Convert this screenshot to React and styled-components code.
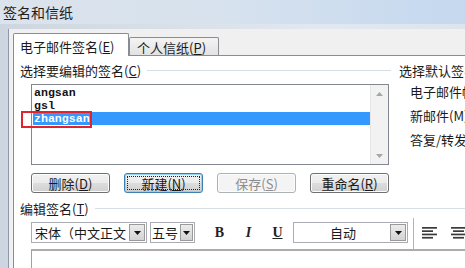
import styled, { createGlobalStyle } from "styled-components";

const GlobalStyle = createGlobalStyle`
  html, body {
    margin: 0;
    padding: 0;
    overflow: hidden;
    background: #f0f0f0;
  }
  body {
    font-family: "Noto Sans CJK SC", "Noto Sans", sans-serif;
  }
`;

const Window = styled.div`
  width: 640px;
  height: 268px;
  display: flex;
  flex-direction: column;
  font-family: "Noto Sans CJK SC", "Noto Sans", sans-serif;
  font-size: 13px;
  color: #1a1a1a;
`;

const TitleBar = styled.div`
  height: 24px;
  flex-shrink: 0;
  display: flex;
  align-items: center;
  padding-left: 3px;
  font-size: 14px;
  color: #1e1e1e;
  background: linear-gradient(to right, #dbe3ec 0%, #d7e2ee 35%, #c8daef 65%, #bcd3ed 100%);
`;

const Frame = styled.div`
  flex: 1;
  min-height: 0;
  display: flex;
  padding: 5px 0 0 8px;
  background: linear-gradient(to right, #cdd6e0, #e2e8ef 50%, #d7dfe8);
`;

const Body = styled.div`
  flex: 1;
  display: flex;
  flex-direction: column;
  border-left: 1px solid #8d99a6;
  background: #f0f0f0;
  padding: 4px 0 0 4px;
`;

const TabRow = styled.div`
  display: flex;
  align-items: flex-end;
  margin-bottom: -1px;
  position: relative;
  z-index: 1;
`;

const Tab = styled.div`
  box-sizing: border-box;
  width: ${(p) => p.$w}px;
  height: ${(p) => (p.$active ? 23 : 18)}px;
  margin-bottom: ${(p) => (p.$active ? 0 : 1)}px;
  border: 1px solid #898c95;
  border-bottom: none;
  border-radius: 2px 2px 0 0;
  padding: ${(p) => (p.$active ? "5px 0 0 6px" : "2px 0 0 7px")};
  background: ${(p) => (p.$active ? "#ffffff" : "linear-gradient(#f4f4f4, #e2e2e2)")};
  line-height: 15px;
  white-space: nowrap;
`;

const Key = styled.span`
  text-decoration: underline;
`;

const Panel = styled.div`
  flex: 1;
  display: flex;
  flex-direction: column;
  border-top: 1px solid #898c95;
  border-left: 1px solid #898c95;
  background: #ffffff;
  padding: 7px 0 0 6px;
`;

const TopSection = styled.div`
  display: flex;
  gap: 8px;
`;

const LeftCol = styled.div`
  width: 371px;
  flex-shrink: 0;
  display: flex;
  flex-direction: column;
`;

const RightCol = styled.div`
  flex: 1;
  display: flex;
  flex-direction: column;
  white-space: nowrap;
`;

const GroupHeader = styled.div`
  display: flex;
  align-items: center;
  height: 15px;
  line-height: 15px;
  white-space: nowrap;
  margin-top: ${(p) => p.$mt || 0}px;
`;

const GroupLine = styled.div`
  flex: 1;
  height: 1px;
  margin-left: 6px;
  background: #d5dfe5;
  box-shadow: 0 1px 0 #ffffff;
`;

const RightItem = styled.div`
  margin: ${(p) => (p.$first ? 6 : 9)}px 0 0 11px;
  line-height: 15px;
`;

const ListBox = styled.div`
  position: relative;
  box-sizing: border-box;
  width: 358px;
  height: 81px;
  margin: 6px 0 0 11px;
  border: 1px solid #828790;
  background: #ffffff;
  display: flex;
`;

const Items = styled.div`
  flex: 1;
  padding-top: 1px;
`;

const Item = styled.div`
  height: 13px;
  line-height: 13px;
  margin-left: 1px;
  padding-left: 1px;
  font-family: "Liberation Mono", monospace;
  font-weight: bold;
  font-size: 11.6px;
  color: ${(p) => (p.$selected ? "#ffffff" : "#111111")};
  background: ${(p) => (p.$selected ? "#3399ff" : "transparent")};
`;

const Scrollbar = styled.div`
  width: 17px;
  display: flex;
  flex-direction: column;
  justify-content: space-between;
  background: #f2f2f2;
  border-left: 1px solid #e6e6e6;
`;

const ScrollBtn = styled.div`
  height: 17px;
  display: flex;
  align-items: center;
  justify-content: center;
`;

const Highlight = styled.div`
  position: absolute;
  left: -11px;
  top: 26px;
  width: 71px;
  height: 17px;
  box-sizing: border-box;
  border: 2px solid #e3222b;
`;

const ButtonRow = styled.div`
  width: 358px;
  margin: 8px 0 0 11px;
  display: flex;
  justify-content: space-between;
`;

const Button = styled.div`
  box-sizing: border-box;
  width: 79px;
  height: 20px;
  display: flex;
  align-items: center;
  justify-content: center;
  border-radius: 3px;
  border: 1px solid ${(p) => (p.$focused ? "#3c7fb1" : p.$disabled ? "#adb2b5" : "#707070")};
  background: ${(p) =>
    p.$disabled
      ? "#f4f4f4"
      : "linear-gradient(#f2f2f2 0%, #ebebeb 50%, #dddddd 51%, #d0d0d0 100%)"};
  box-shadow: ${(p) => (p.$focused ? "inset 0 0 0 1px #98d1ef" : "inset 0 0 0 1px #fcfcfc")};
  outline: ${(p) => (p.$focused ? "1px dotted #222" : "none")};
  outline-offset: -4px;
  color: ${(p) => (p.$disabled ? "#8d8d8d" : "#1a1a1a")};
  line-height: 15px;
`;

const Toolbar = styled.div`
  height: 23px;
  margin: 5px 0 0 11px;
  display: flex;
  align-items: center;
`;

const Combo = styled.div`
  box-sizing: border-box;
  width: ${(p) => p.$w}px;
  height: 21px;
  margin-left: ${(p) => p.$ml || 0}px;
  flex-shrink: 0;
  display: flex;
  border: 1px solid #a9acb2;
  background: #ffffff;
`;

const ComboText = styled.div`
  flex: 1;
  overflow: hidden;
  white-space: nowrap;
  line-height: 19px;
  padding-left: ${(p) => (p.$tight ? 1 : 3)}px;
  text-align: ${(p) => (p.$center ? "center" : "left")};
`;

const DropBtn = styled.div`
  width: ${(p) => (p.$narrow ? 11 : 14)}px;
  margin: 1px;
  display: flex;
  align-items: center;
  justify-content: center;
  border: 1px solid #9a9a9a;
  background: linear-gradient(#ececec, #d2d2d2);
`;

const ToolBtn = styled.div`
  width: 29px;
  height: 21px;
  margin-left: ${(p) => p.$ml || 0}px;
  flex-shrink: 0;
  display: flex;
  align-items: center;
  justify-content: center;
  font-family: "Liberation Serif", serif;
  font-weight: bold;
  font-size: 14px;
  color: #222222;
`;

const Separator = styled.div`
  width: 1px;
  height: 31px;
  margin: -3px 0 0 5px;
  align-self: flex-start;
  background: #b4b4b4;
  border-right: 1px solid #ffffff;
  flex-shrink: 0;
`;

const Editor = styled.div`
  flex: 1;
  margin: 5px 0 0 11px;
  border-top: 2px solid #acacac;
  border-left: 1px solid #a0a0a0;
  background: #ffffff;
`;

function Arrow({ up, color = "#111" }) {
  return (
    <svg width="7" height="4" viewBox="0 0 7 4">
      <polygon points={up ? "0,4 7,4 3.5,0" : "0,0 7,0 3.5,4"} fill={color} />
    </svg>
  );
}

function AlignIcon({ center }) {
  const lines = [15, 11, 15, 11];
  return (
    <svg width="15" height="12" viewBox="0 0 15 12">
      {lines.map((w, i) => (
        <rect
          key={i}
          x={center ? (15 - w) / 2 : 0}
          y={i * 3.3}
          width={w}
          height="1.7"
          fill="#3a3a3a"
        />
      ))}
    </svg>
  );
}

export default function App() {
  return (
    <Window>
      <GlobalStyle />
      <TitleBar>签名和信纸</TitleBar>
      <Frame>
        <Body>
          <TabRow>
            <Tab $active $w={116}>
              电子邮件签名(<Key>E</Key>)
            </Tab>
            <Tab $w={90}>
              个人信纸(<Key>P</Key>)
            </Tab>
          </TabRow>
          <Panel>
            <TopSection>
              <LeftCol>
                <GroupHeader>
                  选择要编辑的签名(<Key>C</Key>)
                  <GroupLine />
                </GroupHeader>
                <ListBox>
                  <Items>
                    <Item>angsan</Item>
                    <Item>gsl</Item>
                    <Item $selected>zhangsan</Item>
                  </Items>
                  <Scrollbar>
                    <ScrollBtn>
                      <Arrow up color="#a6a6a6" />
                    </ScrollBtn>
                    <ScrollBtn>
                      <Arrow color="#a6a6a6" />
                    </ScrollBtn>
                  </Scrollbar>
                  <Highlight />
                </ListBox>
                <ButtonRow>
                  <Button>
                    删除(<Key>D</Key>)
                  </Button>
                  <Button $focused>
                    新建(<Key>N</Key>)
                  </Button>
                  <Button $disabled>
                    保存(<Key>S</Key>)
                  </Button>
                  <Button>
                    重命名(<Key>R</Key>)
                  </Button>
                </ButtonRow>
              </LeftCol>
              <RightCol>
                <GroupHeader>
                  选择默认签名
                  <GroupLine />
                </GroupHeader>
                <RightItem $first>电子邮件帐户(A):</RightItem>
                <RightItem>新邮件(M):</RightItem>
                <RightItem>答复/转发(F):</RightItem>
              </RightCol>
            </TopSection>

            <GroupHeader $mt={8}>
              编辑签名(<Key>T</Key>)
              <GroupLine />
            </GroupHeader>
            <Toolbar>
              <Combo $w={116}>
                <ComboText>宋体（中文正文</ComboText>
                <DropBtn>
                  <Arrow />
                </DropBtn>
              </Combo>
              <Combo $w={45} $ml={3}>
                <ComboText $tight>五号</ComboText>
                <DropBtn $narrow>
                  <Arrow />
                </DropBtn>
              </Combo>
              <ToolBtn $ml={10}>B</ToolBtn>
              <ToolBtn style={{ fontStyle: "italic" }}>I</ToolBtn>
              <ToolBtn style={{ textDecoration: "underline" }}>U</ToolBtn>
              <Combo $w={115} $ml={1}>
                <ComboText $center>自动</ComboText>
                <DropBtn>
                  <Arrow />
                </DropBtn>
              </Combo>
              <Separator />
              <ToolBtn>
                <AlignIcon />
              </ToolBtn>
              <ToolBtn>
                <AlignIcon center />
              </ToolBtn>
            </Toolbar>
            <Editor />
          </Panel>
        </Body>
      </Frame>
    </Window>
  );
}
